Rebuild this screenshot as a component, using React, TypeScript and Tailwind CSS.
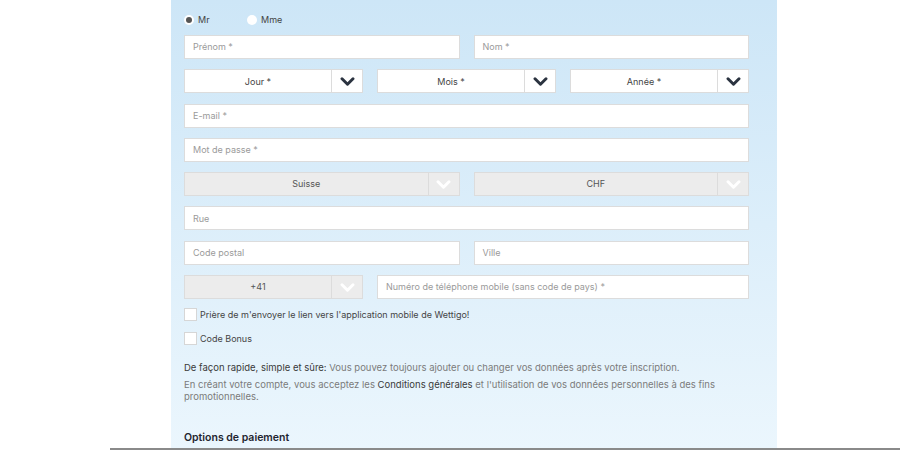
import React from "react";

const font = { fontFamily: "Inter, 'Open Sans', sans-serif" };

function Chevron({ light }: { light?: boolean }) {
  return (
    <svg viewBox="0 0 16 12" className="w-[15px] h-[11px]">
      <path
        d="M2 3l6 6 6-6"
        fill="none"
        stroke={light ? "#ffffff" : "#2b3340"}
        strokeWidth="3.2"
        strokeLinecap="round"
        strokeLinejoin="round"
      />
    </svg>
  );
}

function Input({ label, className = "" }: { label: string; className?: string }) {
  return (
    <div
      className={`h-[24px] bg-white border border-[#dcdcdc] flex items-center px-[8px] text-[9px] text-[#9a9a9a] ${className}`}
    >
      {label}
    </div>
  );
}

function Select({ label, gray, className = "" }: { label: string; gray?: boolean; className?: string }) {
  return (
    <div
      className={`h-[24px] border border-[#dcdcdc] flex items-stretch text-[9px] ${
        gray ? "bg-[#ececec] text-[#555]" : "bg-white text-[#444]"
      } ${className}`}
    >
      <div className="flex-1 flex items-center justify-center">{label}</div>
      <div className="w-[31px] border-l border-[#dcdcdc] flex items-center justify-center">
        <Chevron light={gray} />
      </div>
    </div>
  );
}

function Checkbox({ label }: { label: string }) {
  return (
    <div className="flex items-center gap-[3px] text-[9px] text-[#444]">
      <div className="w-[13px] h-[13px] bg-white border border-[#d6d6d6]" />
      <span>{label}</span>
    </div>
  );
}

export default function App() {
  return (
    <div className="w-[900px] h-[450px] bg-white overflow-hidden flex flex-col" style={font}>
      <div className="h-[448px] flex">
        <div className="ml-[171px] w-[606px] h-full bg-gradient-to-b from-[#cde6f7] to-[#ebf6fd] pl-[13px] pr-[28px] pt-[14px]">
          {/* Civilité */}
          <div className="flex items-center h-[12px] text-[9px] text-[#444]">
            <div className="flex items-center gap-[4px] w-[63px]">
              <div className="w-[10px] h-[10px] rounded-full bg-white flex items-center justify-center">
                <div className="w-[6px] h-[6px] rounded-full bg-[#555]" />
              </div>
              <span>Mr</span>
            </div>
            <div className="flex items-center gap-[4px]">
              <div className="w-[10px] h-[10px] rounded-full bg-white" />
              <span>Mme</span>
            </div>
          </div>

          <div className="mt-[9px] flex flex-col gap-[10.3px]">
            <div className="grid grid-cols-2 gap-[14px]">
              <Input label="Prénom *" />
              <Input label="Nom *" />
            </div>
            <div className="grid grid-cols-3 gap-[14px]">
              <Select label="Jour *" />
              <Select label="Mois *" />
              <Select label="Année *" />
            </div>
            <Input label="E-mail *" />
            <Input label="Mot de passe *" />
            <div className="grid grid-cols-2 gap-[14px]">
              <Select label="Suisse" gray />
              <Select label="CHF" gray />
            </div>
            <Input label="Rue" />
            <div className="grid grid-cols-2 gap-[14px]">
              <Input label="Code postal" />
              <Input label="Ville" />
            </div>
            <div className="flex gap-[14px]">
              <Select label="+41" gray className="w-[179px]" />
              <Input label="Numéro de téléphone mobile (sans code de pays) *" className="flex-1" />
            </div>
          </div>

          <div className="mt-[9px] flex flex-col gap-[10px]">
            <Checkbox label="Prière de m'envoyer le lien vers l'application mobile de Wettigo!" />
            <Checkbox label="Code Bonus" />
          </div>

          <p className="mt-[16px] text-[9.5px] leading-[13px] text-[#7b7b7b]">
            <span className="text-[#3a3a3a]">De façon rapide, simple et sûre:</span> Vous pouvez toujours
            ajouter ou changer vos données après votre inscription.
          </p>
          <p className="mt-[5px] text-[9.5px] leading-[11.5px] text-[#7b7b7b]">
            En créant votre compte, vous acceptez les{" "}
            <span className="text-[#3a3a3a]">Conditions générales</span> et l'utilisation de vos données
            personnelles à des fins
            <br />
            promotionnelles.
          </p>

          <h3 className="mt-[28px] text-[10.5px] font-semibold text-[#1f2530]">Options de paiement</h3>
        </div>
      </div>
      <div className="ml-[110px] h-[2px] bg-[#8a8a8a]" />
    </div>
  );
}
